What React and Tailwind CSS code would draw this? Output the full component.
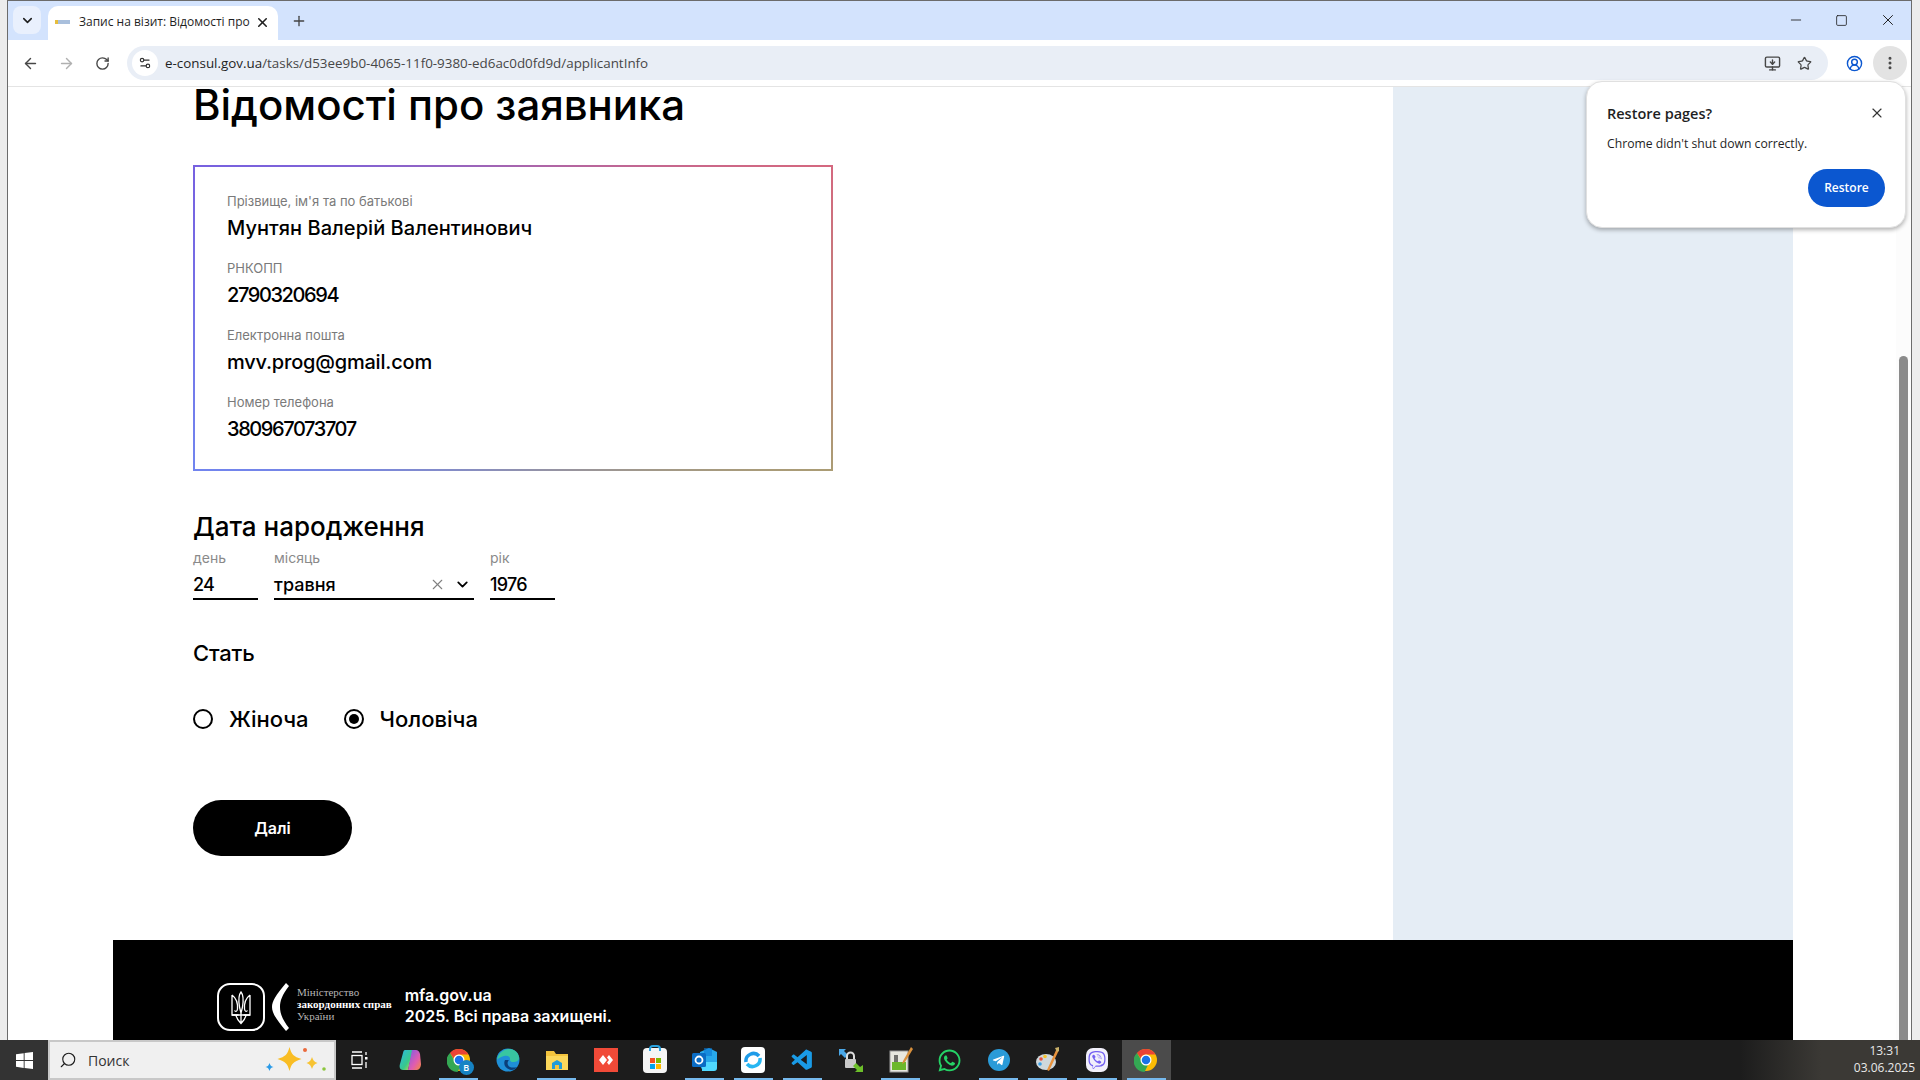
import {
  ArrowLeft, ArrowRight, RotateCw, X, Plus, Star, Minus, Square, EllipsisVertical,
  CircleUserRound, MonitorDown, Search, Settings2, ChevronDown
} from 'lucide-react';
import { FaWhatsapp, FaViber, FaTelegramPlane } from 'react-icons/fa';
import { VscVscode } from 'react-icons/vsc';

const UI = "font-['Open_Sans','Noto_Sans',sans-serif]";

function ChromeLogo({ size = 24 }) {
  return (
    <svg width={size} height={size} viewBox="0 0 48 48">
      <circle cx="24" cy="24" r="22" fill="#fbbc04" />
      <path d="M24 2a22 22 0 0 1 19 11H24a11 11 0 0 0-10.5 8L6 10A22 22 0 0 1 24 2z" fill="#ea4335" />
      <path d="M6 10l9 15a10 10 0 0 0 13 9l-7 13.8A22 22 0 0 1 6 10z" fill="#34a853" />
      <circle cx="24" cy="24" r="11" fill="#fff" />
      <circle cx="24" cy="24" r="8.5" fill="#1a73e8" />
    </svg>
  );
}

function Tryzub() {
  return (
    <svg width="48" height="48" viewBox="0 0 48 48" fill="none" stroke="#fff">
      <rect x="1" y="1" width="46" height="46" rx="12" strokeWidth="2" />
      <path d="M24 9c-2.500 3-2.500 9-1.500 15l1.500 6 1.500-6c1-6 1-12-1.500-15z" strokeWidth="1.300" />
      <path d="M15 12v20h6.500M33 12v20h-6.500M15 12c4 3 6 7 5.500 14-.3 2.500-2 3-3 1.500M33 12c-4 3-6 7-5.500 14 .3 2.500 2 3 3 1.500" strokeWidth="1.300" />
      <path d="M15 32h18M19 32c.5 4 3 6.500 5 8.500 2-2 4.500-4.500 5-8.500M24 30v10" strokeWidth="1.300" />
    </svg>
  );
}

function TaskIcon({ children, bar, active }) {
  return (
    <div className={`relative flex h-10 w-[49.1px] items-center justify-center ${active ? 'bg-[#4b4b4b]' : ''}`}>
      {children}
      {bar && <div className="absolute bottom-0 left-[5px] right-[5px] h-[2px] bg-[#76b9ed]" />}
    </div>
  );
}

function Field({ label, value, spacing }) {
  return (
    <div className="h-[67px]">
      <p className="text-[13px] leading-[18px] text-[#7a7a7a]">{label}</p>
      <p className={`mt-[4px] text-[20px] font-medium leading-[28px] text-black ${spacing}`}>{value}</p>
    </div>
  );
}

function DatePart({ label, value, className, digits, children }) {
  return (
    <div className={className}>
      <p className="text-[14px] leading-[18px] text-[#8a8a8a]">{label}</p>
      <div className={`mt-[6px] flex h-[27px] items-center border-b-2 border-black pb-[2px] text-[18px] font-medium ${digits ? 'tracking-[-0.7px]' : ''}`}>
        <span className="flex-1">{value}</span>
        {children}
      </div>
    </div>
  );
}

function Radio({ label, checked }) {
  return (
    <div className="flex items-center gap-4">
      <div className="flex h-5 w-5 items-center justify-center rounded-full border-2 border-black">
        {checked && <div className="h-[10px] w-[10px] rounded-full bg-black" />}
      </div>
      <span className="text-[22px] font-medium leading-7">{label}</span>
    </div>
  );
}

export default function App() {
  return (
    <div className="relative flex h-screen flex-col overflow-hidden bg-[#ececec] font-['Inter',sans-serif] text-black">
      <div className="flex min-h-0 flex-1 pl-[7px] pr-[8px]">
        <div className="flex min-w-0 flex-1 flex-col border-x border-t border-[#6b6b6b] bg-white">
          {/* tab strip */}
          <div className={`flex h-[39px] items-end bg-[#d3e3fd] ${UI}`}>
            <div className="mb-[6px] ml-[5px] flex h-[28px] w-[28px] items-center justify-center rounded-lg bg-[#e9f0fd]">
              <ChevronDown size={15} strokeWidth={2.5} className="text-[#1f1f1f]" />
            </div>
            <div className="ml-[7px] flex h-[34px] w-[230px] items-center rounded-t-[10px] bg-white pb-[2px] pl-[7px] pr-[8px]">
              <div className="h-[4px] w-[15px] bg-[linear-gradient(90deg,#e6bd3c_20%,#a9bfdc_20%)]" />
              <span className="ml-[9px] w-[172px] overflow-hidden whitespace-nowrap text-[12px] text-[#1f1f1f]">Запис на візит: Відомості про з</span>
              <X size={15} strokeWidth={2.5} className="ml-auto text-[#1f1f1f]" />
            </div>
            <Plus size={16} strokeWidth={2} className="mb-[11px] ml-[13px] text-[#444]" />
            <div className="mb-[11px] ml-auto flex items-center gap-[31px] pr-[14px] text-[#1f1f1f]">
              <Minus size={16} strokeWidth={1.3} />
              <Square size={13} strokeWidth={1.5} />
              <X size={18} strokeWidth={1.3} />
            </div>
          </div>
          {/* toolbar */}
          <div className={`flex h-[47px] shrink-0 items-center border-b border-[#e4e4e4] bg-white pl-[14px] pr-[4px] ${UI}`}>
            <ArrowLeft size={17} className="text-[#474747]" />
            <ArrowRight size={17} className="ml-[19px] text-[#b0b0b0]" />
            <RotateCw size={15} strokeWidth={2.2} className="ml-[20px] text-[#474747]" />
            <div className="ml-[17px] flex h-[34px] flex-1 items-center rounded-full bg-[#e9eef6] pl-[5px] pr-[16px]">
              <div className="flex h-[26px] w-[26px] items-center justify-center rounded-full bg-white">
                <Settings2 size={14} className="text-[#333]" />
              </div>
              <span className="ml-[7px] text-[13.4px] text-[#1f1f1f]">
                e-consul.gov.ua<span className="text-[#474747]">/tasks/d53ee9b0-4065-11f0-9380-ed6ac0d0fd9d/applicantInfo</span>
              </span>
              <MonitorDown size={17} className="ml-auto text-[#474747]" />
              <Star size={15} strokeWidth={2} className="ml-[16px] text-[#474747]" />
            </div>
            <CircleUserRound size={17} strokeWidth={2} className="ml-[18px] text-[#0b57d0]" />
            <div className="ml-[10px] flex h-[34px] w-[34px] items-center justify-center rounded-full bg-[#e3e3e3]">
              <EllipsisVertical size={16} strokeWidth={2.5} className="text-[#474747]" />
            </div>
          </div>
          {/* page */}
          <div className="flex min-h-0 flex-1 overflow-hidden">
            <div className="flex min-w-0 flex-1 flex-col">
              <div className="flex h-[853px] shrink-0 pl-[105px]">
                <div className="w-[1280px] pl-[80px]">
                  <h1 className="text-[42px] font-medium leading-[36px] tracking-[-0.05px]">Відомості про заявника</h1>
                  <div className="mt-[42px] box-border h-[306px] w-[640px] border-2 px-[32px] pt-[25px] [border-image:conic-gradient(from_64.6deg,#d4687f,#ab9c74_50.8deg,#7184ef_180deg,#7761e0_230.8deg,#d4687f_360deg)_1]">
                    <Field label="Прізвище, ім'я та по батькові" value="Мунтян Валерій Валентинович" spacing="tracking-[0.05px]" />
                    <Field label="РНКОПП" value="2790320694" spacing="tracking-[-1.4px]" />
                    <Field label="Електронна пошта" value="mvv.prog@gmail.com" spacing="tracking-[-0.2px]" />
                    <Field label="Номер телефона" value="380967073707" spacing="tracking-[-1.4px]" />
                  </div>
                  <h2 className="mt-[39px] text-[26px] font-medium leading-[34px]">Дата народження</h2>
                  <div className="mt-[5px] flex gap-4">
                    <DatePart label="день" value="24" className="w-[65px]" digits />
                    <DatePart label="місяць" value="травня" className="w-[200px]">
                      <X size={17} strokeWidth={1.5} className="mr-[8px] text-[#808080]" />
                      <ChevronDown size={17} strokeWidth={2.5} className="mr-[3px]" />
                    </DatePart>
                    <DatePart label="рік" value="1976" className="w-[65px]" digits />
                  </div>
                  <h3 className="mt-[38px] text-[22px] font-medium leading-[30px] tracking-[-0.2px]">Стать</h3>
                  <div className="mt-[37px] flex gap-[35px]">
                    <Radio label="Жіноча" />
                    <Radio label="Чоловіча" checked />
                  </div>
                  <button className="mt-[67px] flex h-[56px] w-[159px] items-center justify-center rounded-full bg-black text-[16px] font-semibold text-white">Далі</button>
                </div>
                <div className="w-[400px] bg-[#e5edf5]" />
              </div>
              <div className="ml-[105px] mr-[103px] flex h-[100px] shrink-0 items-start bg-black pl-[104px] pt-[43px] text-white">
                <Tryzub />
                <svg width="18" height="48" viewBox="0 0 18 48" className="ml-[7px]">
                  <path d="M14 0C4 12 0 18 0 24s4 12 14 24l3-3C10 36 8 30 8 24s2-12 9-21z" fill="#fff" />
                </svg>
                <div className="ml-[7px] mt-[3px] font-['Liberation_Serif',serif] text-[11px] leading-[12px] text-[#b5b5b5]">
                  <p>Міністерство</p>
                  <p className="font-bold text-white">закордонних справ</p>
                  <p>України</p>
                </div>
                <div className="ml-[13px] mt-[2px] text-[16px] font-semibold leading-[21px]">
                  <p>mfa.gov.ua</p>
                  <p>2025. Всі права захищені.</p>
                </div>
              </div>
            </div>
            {/* scrollbar */}
            <div className="flex w-[15px] shrink-0 flex-col bg-[#fcfcfc] pl-[3px] pr-[3px] pt-[269px]">
              <div className="flex-1 rounded-t-full bg-[#8b8b8b]" />
            </div>
          </div>
        </div>
      </div>

      {/* taskbar */}
      <div className={`flex h-10 shrink-0 items-stretch bg-[#1c1c1c] ${UI}`}>
        <div className="flex w-[48px] items-center justify-center bg-[#333]">
          <svg width="17" height="17" viewBox="0 0 17 17" fill="#fff">
            <path d="M0 2.3 7.7 1.2v6.9H0zM8.6 1 17 0v8.1H8.6zM0 9h7.7v6.9L0 14.8zM8.6 9H17v8l-8.4-1.1z" />
          </svg>
        </div>
        <div className="flex w-[288px] items-center border-[2px] border-[#c8c8c8] bg-[#f0f0f0] pl-[9px]">
          <Search size={18} strokeWidth={1.5} className="-scale-x-100 text-[#1c1c1c]" />
          <span className="ml-[11px] text-[14px] text-[#333]">Поиск</span>
          <svg width="64" height="30" viewBox="0 0 64 30" className="ml-auto mr-[5px]">
            <path d="M24.500 2c2 7.500 4 9.500 12 12-8 2.500-10 4.500-12 12-2-7.500-4-9.500-12-12 8-2.500 10-4.500 12-12z" fill="#f9bd24" />
            <path d="M47 12c1 3 2 5 5.500 6-3.500 1-4.500 3-5.500 6-1-3-2-5-5.500-6 3.500-1 4.500-3 5.500-6z" fill="#f7c332" />
            <path d="M4.500 18c.8 2.500 1.500 3.200 4 4-2.500.8-3.200 1.500-4 4-.8-2.500-1.500-3.200-4-4 2.500-.8 3.200-1.500 4-4z" fill="#2b9be8" />
            <circle cx="40" cy="5" r="2" fill="#ea6a3c" />
            <circle cx="59" cy="24" r="1.800" fill="#8cc63f" />
          </svg>
        </div>
        <TaskIcon>
          <svg width="18" height="18" viewBox="0 0 18 18" fill="none" stroke="#fff" strokeWidth="1.3" className="-ml-[3px]">
            <path d="M2 1h10M2 17h10" />
            <rect x="2" y="4.5" width="10" height="9" />
            <rect x="15" y="6" width="2.5" height="2.5" fill="#fff" stroke="none" />
            <path d="M16 1v3M16 11v6" />
          </svg>
        </TaskIcon>
        <TaskIcon>
          <svg width="24" height="24" viewBox="0 0 24 24">
            <defs>
              <linearGradient id="cp1" x1="0" y1="0" x2="1" y2="1"><stop offset="0" stopColor="#2bb6e8" /><stop offset="0.6" stopColor="#38c98a" /><stop offset="1" stopColor="#f5d33c" /></linearGradient>
              <linearGradient id="cp2" x1="0" y1="0" x2="1" y2="1"><stop offset="0" stopColor="#7a5ce8" /><stop offset="0.6" stopColor="#e05cb0" /><stop offset="1" stopColor="#f58a3c" /></linearGradient>
            </defs>
            <path d="M7 2h8l-5 20H5c-3 0-4-3-3-6L5 5c.4-1.800 1-3 2-3z" fill="url(#cp1)" />
            <path d="M14 2h4c2 0 3 1 4 4l1 10c0 3-2 6-4 6h-9z" fill="url(#cp2)" />
          </svg>
        </TaskIcon>
        <TaskIcon bar>
          <div className="relative">
            <ChromeLogo size={24} />
            <div className="absolute -bottom-[3px] -right-[3px] flex h-[15px] w-[15px] items-center justify-center rounded-full bg-[#1683c4] text-[9px] font-semibold text-white">B</div>
          </div>
        </TaskIcon>
        <TaskIcon>
          <svg width="24" height="24" viewBox="0 0 24 24">
            <circle cx="12" cy="12" r="11.5" fill="#1f8fd8" />
            <path d="M1 12C2 5 8 1 13 1c6 0 10 4 10 9 0 3-3 4-6 4-3 0-3-2-3-3 0-3-3-4-6-3-3 1-6 2-7 4z" fill="#38c6a0" />
            <path d="M9 12c-2 4 0 9 6 10 3 0 5-1 6-3-3 1-8 1-9-2-1-2 0-4 1-5z" fill="#0b3f7a" />
          </svg>
        </TaskIcon>
        <TaskIcon bar>
          <svg width="24" height="24" viewBox="0 0 24 24">
            <path d="M1 3h8l2 3h12v16H1z" fill="#f3c33d" />
            <path d="M1 8h22v14H1z" fill="#fbd75b" />
            <path d="M7 15l5-3 5 3v6H7z" fill="#1f9bd9" />
            <rect x="10" y="17" width="4" height="4" fill="#f3c33d" />
          </svg>
        </TaskIcon>
        <TaskIcon>
          <div className="flex h-6 w-6 items-center justify-center bg-[#f14a38]">
            <svg width="14" height="12" viewBox="0 0 14 12" fill="#fff"><path d="M4 1l4 5-4 5-4-5zM10 1l4 5-4 5-2-2.5L10 6 8 3.500z" /></svg>
          </div>
        </TaskIcon>
        <TaskIcon>
          <div className="relative flex h-[25px] w-[24px] items-end justify-center rounded-[4px] bg-[#f5f5f5] pb-[4px]">
            <div className="absolute -top-[3px] h-[6px] w-[12px] rounded-t-[4px] border-2 border-b-0 border-[#2aa3e0]" />
            <div className="grid grid-cols-2 gap-[1px]">
              <div className="h-[5px] w-[5px] bg-[#f25022]" />
              <div className="h-[5px] w-[5px] bg-[#7fba00]" />
              <div className="h-[5px] w-[5px] bg-[#00a4ef]" />
              <div className="h-[5px] w-[5px] bg-[#ffb900]" />
            </div>
          </div>
        </TaskIcon>
        <TaskIcon bar>
          <svg width="25" height="24" viewBox="0 0 25 24">
            <path d="M8 4l9-4 8 4v13l-4 6H11l-3-5z" fill="#28a8ea" />
            <path d="M12 0h8v8h-8z" fill="#0a78d4" opacity=".6" />
            <path d="M10 14h15v6c0 2-1 3-3 3H10z" fill="#50d9ff" />
            <rect x="0" y="5" width="14" height="14" rx="1.500" fill="#0a6cc4" />
            <circle cx="7" cy="12" r="3.500" fill="none" stroke="#fff" strokeWidth="1.800" />
          </svg>
        </TaskIcon>
        <TaskIcon bar>
          <div className="flex h-[26px] w-[24px] items-center justify-center rounded-[4px] bg-white">
            <svg width="18" height="18" viewBox="0 0 18 18" fill="none" stroke="#1e9be8" strokeWidth="3.500">
              <path d="M15 5A7.500 7.500 0 0 0 2 11" />
              <path d="M3 13A7.500 7.500 0 0 0 16 7" stroke="#27b6f2" />
            </svg>
          </div>
        </TaskIcon>
        <TaskIcon bar>
          <VscVscode size={25} className="text-[#1a9be6]" />
        </TaskIcon>
        <TaskIcon>
          <svg width="26" height="26" viewBox="0 0 26 26">
            <path d="M1 2h7L6 4l4 4-3 3-4-4-2 2z" fill="#4aa8e8" />
            <rect x="7" y="12" width="11" height="9" rx="1" fill="#c9c9c9" />
            <path d="M9 12V9a3.500 3.500 0 0 1 7 0v3" fill="none" stroke="#ddd" strokeWidth="2" />
            <path d="M25 25h-8l2-2-4-4 3-3 4 4 3-2z" fill="#6cbf2a" />
          </svg>
        </TaskIcon>
        <TaskIcon bar>
          <svg width="24" height="26" viewBox="0 0 24 26">
            <rect x="1" y="4" width="18" height="21" fill="#e8e8e0" stroke="#999" />
            <rect x="3" y="15" width="14" height="8" fill="#6cb82c" />
            <path d="M6 8v7M8 8v7" stroke="#222" strokeWidth="1.200" />
            <path d="M22 0 14 14l-1 3 3-2L24 2z" fill="#d9903c" />
          </svg>
        </TaskIcon>
        <TaskIcon>
          <FaWhatsapp size={25} className="text-[#25d366]" />
        </TaskIcon>
        <TaskIcon bar>
          <div className="flex h-[22px] w-[22px] items-center justify-center rounded-full bg-[#2a9bd8]">
            <FaTelegramPlane size={13} className="text-white" />
          </div>
        </TaskIcon>
        <TaskIcon bar>
          <svg width="24" height="26" viewBox="0 0 24 26">
            <ellipse cx="10" cy="15" rx="10" ry="8" fill="#cfd8dc" />
            <circle cx="5" cy="12" r="1.800" fill="#e84f3c" />
            <circle cx="9" cy="9.500" r="1.800" fill="#f5c32c" />
            <circle cx="4" cy="17" r="1.800" fill="#3aa0e8" />
            <path d="M21 1l2 2-10 21-2-1z" fill="#e8923c" />
            <path d="M19 1l4-1 0 4-2 1z" fill="#c9b068" />
          </svg>
        </TaskIcon>
        <TaskIcon bar>
          <div className="flex h-[24px] w-[22px] items-center justify-center rounded-[7px] bg-[#f2f0fb]">
            <FaViber size={18} className="text-[#7360f2]" />
          </div>
        </TaskIcon>
        <TaskIcon bar active>
          <ChromeLogo size={24} />
        </TaskIcon>
        <div className="ml-auto flex w-[180px] flex-col items-end justify-center bg-[linear-gradient(90deg,#1c1c1c_0%,#3b3935_45%,#3b3935_100%)] pb-[2px] pr-[5px] text-[12px] leading-[17px] text-[#e8e8e8]">
          <span className="pr-[15px]">13:31</span>
          <span>03.06.2025</span>
        </div>
      </div>

      {/* restore pages bubble */}
      <div className={`absolute left-[1586px] top-[81px] h-[147px] w-[320px] rounded-2xl border border-[#e0e0e0] bg-white px-5 pt-[22px] shadow-[0_2px_4px_rgba(0,0,0,0.3)] ${UI}`}>
        <div className="flex items-center justify-between">
          <p className="text-[14.5px] font-semibold leading-5 text-[#1f1f1f]">Restore pages?</p>
          <X size={16} strokeWidth={1.7} className="-mt-[2px] text-[#333]" />
        </div>
        <p className="mt-[10px] text-[12.2px] leading-5 text-[#1f1f1f]">Chrome didn't shut down correctly.</p>
        <div className="mt-[15px] flex justify-end">
          <button className="h-[38px] w-[77px] rounded-full bg-[#0b57d0] text-[12px] font-semibold text-white">Restore</button>
        </div>
      </div>
    </div>
  );
}
